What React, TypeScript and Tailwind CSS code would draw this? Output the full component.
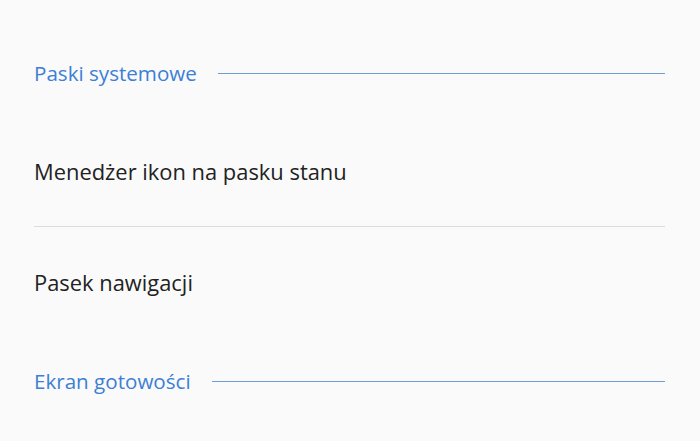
export default function App() {
  const font = { fontFamily: '"Open Sans", Roboto, sans-serif' };
  return (
    <div className="w-[700px] h-[441px] overflow-hidden bg-[#fafafa]" style={font}>
      <div className="pl-[34px] pr-[35px]">
        <div className="h-[50px]" />
        <div className="flex items-center h-[46px]">
          <span className="text-[20.6px] text-[#3c7fd5] leading-none">Paski systemowe</span>
          <div className="flex-1 ml-[21px] h-px bg-[#6e9ed8]" />
        </div>
        <div className="h-[131px] pt-[22px] flex items-center border-b border-[#dcdcdc]">
          <span className="text-[21.9px] text-[#222222] leading-none">Menedżer ikon na pasku stanu</span>
        </div>
        <div className="h-[112px] flex items-center">
          <span className="text-[21.9px] text-[#222222] leading-none">Pasek nawigacji</span>
        </div>
        <div className="flex items-center h-[46px] mt-[19px]">
          <span className="text-[20.6px] text-[#3c7fd5] leading-none">Ekran gotowości</span>
          <div className="flex-1 ml-[21px] h-px bg-[#6e9ed8]" />
        </div>
      </div>
    </div>
  );
}
